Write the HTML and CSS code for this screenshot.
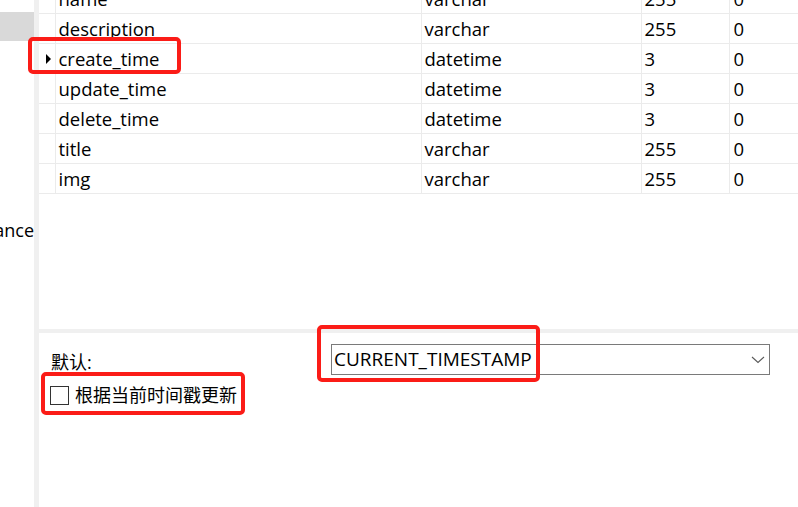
FILE: index.html
```html
<!DOCTYPE html>
<html>
<head>
<meta charset="utf-8">
<link rel="stylesheet" href="styles.css">
</head>
<body>
<div class="app">
  <aside class="sidebar">
    <div class="side-sel"></div>
    <div class="side-text">ance</div>
  </aside>
  <div class="strip"></div>
  <main class="main">
    <section class="grid-area">
      <table class="grid">
        <colgroup><col class="c-hd"><col class="c-name"><col class="c-type"><col class="c-len"><col class="c-dec"></colgroup>
        <tr><td class="hd"></td><td>name</td><td>varchar</td><td>255</td><td>0</td></tr>
        <tr><td class="hd"></td><td>description</td><td>varchar</td><td>255</td><td>0</td></tr>
        <tr><td class="hd"><span class="tri"></span></td><td>create_time</td><td>datetime</td><td>3</td><td>0</td></tr>
        <tr><td class="hd"></td><td>update_time</td><td>datetime</td><td>3</td><td>0</td></tr>
        <tr><td class="hd"></td><td>delete_time</td><td>datetime</td><td>3</td><td>0</td></tr>
        <tr><td class="hd"></td><td>title</td><td>varchar</td><td>255</td><td>0</td></tr>
        <tr><td class="hd"></td><td>img</td><td>varchar</td><td>255</td><td>0</td></tr>
      </table>
    </section>
    <div class="hsep"></div>
    <section class="props">
      <div class="prop-row">
        <label class="prop-label">默认:</label>
        <div class="combo">
          <span class="combo-text">CURRENT_TIMESTAMP</span>
          <svg class="chev" width="14" height="8" viewBox="0 0 14 8"><polyline points="1,1 7,6.5 13,1" fill="none" stroke="#5a5a5a" stroke-width="1.1"/></svg>
        </div>
      </div>
      <div class="check-row">
        <span class="checkbox"></span>
        <span class="check-label">根据当前时间戳更新</span>
      </div>
    </section>
  </main>
</div>
<div class="mark mark-row"></div>
<div class="mark mark-combo"></div>
<div class="mark mark-check"></div>
</body>
</html>
```
FILE: styles.css
```css
html, body {
  margin: 0;
  padding: 0;
  background: #fff;
  width: 798px;
  height: 507px;
  overflow: hidden;
  font-family: "Open Sans", "Noto Sans CJK SC", sans-serif;
  font-size: 18px;
  color: #000;
}
.app {
  display: flex;
  height: 507px;
}
.sidebar {
  width: 34px;
  flex: none;
  position: relative;
  overflow: hidden;
}
.side-sel {
  margin-top: 12px;
  height: 29px;
  background: #d9d9d9;
}
.side-text {
  margin-top: 177px;
  text-align: right;
  white-space: nowrap;
  line-height: 24px;
  direction: rtl;
}
.strip {
  width: 5px;
  flex: none;
  background: #f0f0f0;
}
.main {
  flex: 1;
  display: flex;
  flex-direction: column;
  min-width: 0;
}
.grid-area {
  height: 329px;
  overflow: hidden;
  flex: none;
}
.grid {
  border-collapse: collapse;
  table-layout: fixed;
  width: 790px;
  margin-top: -16px;
  font-size: 18.5px;
}
.c-hd { width: 16px; }
.c-name { width: 366px; }
.c-type { width: 220px; }
.c-len { width: 88px; }
.c-dec { width: 100px; }
.grid td {
  height: 29px;
  padding: 0 0 0 3px;
  border-bottom: 1px solid #ebebeb;
  border-right: 1px solid #ebebeb;
  line-height: 29px;
  white-space: nowrap;
  vertical-align: middle;
}
.grid td.hd {
  padding: 0;
  position: relative;
}
.grid td:nth-child(5) { padding-left: 4px; }
.tri {
  display: block;
  width: 0;
  height: 0;
  margin-left: 7px;
  border-left: 5px solid #000;
  border-top: 5px solid transparent;
  border-bottom: 5px solid transparent;
}
.hsep {
  height: 4px;
  background: #f0f0f0;
  flex: none;
}
.props {
  padding: 11px 0 0 12px;
}
.prop-row {
  display: flex;
  align-items: center;
}
.prop-label {
  width: 280px;
  flex: none;
  padding-top: 3px;
}
.combo {
  width: 439px;
  height: 31px;
  box-sizing: border-box;
  border: 1px solid #7a7a7a;
  display: flex;
  align-items: center;
  justify-content: space-between;
  padding: 0 4px 0 2px;
}
.combo-text {
  line-height: 29px;
  font-size: 19px;
}
.check-row {
  display: flex;
  align-items: center;
  margin-top: 9px;
  margin-left: -1px;
}
.checkbox {
  width: 19px;
  height: 19px;
  box-sizing: border-box;
  border: 1px solid #333;
  background: #fff;
  flex: none;
}
.check-label {
  margin-left: 6px;
  line-height: 22px;
}
.mark {
  position: absolute;
  box-sizing: border-box;
  border: 4px solid #fb1c17;
  border-radius: 5px;
}
.mark-row { left: 28px; top: 37px; width: 153px; height: 37px; }
.mark-combo { left: 317px; top: 325px; width: 223px; height: 57px; }
.mark-check { left: 41px; top: 372px; width: 204px; height: 43px; }
```
